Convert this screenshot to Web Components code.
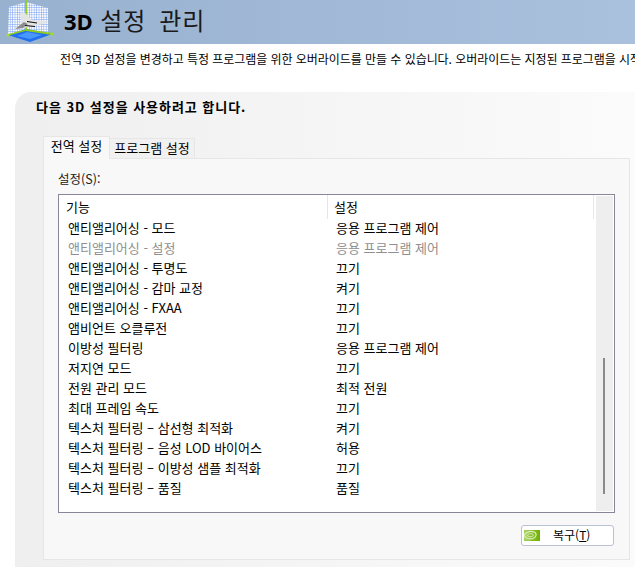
<!DOCTYPE html>
<html lang="ko">
<head>
<meta charset="utf-8">
<title>3D 설정 관리</title>
<style>
  html, body { margin: 0; padding: 0; background: #fff; overflow: hidden; }
  body { width: 635px; height: 567px; font: 13px "Noto Sans CJK KR", "Noto Sans", sans-serif; color: #000; }
</style>
</head>
<body>
<page-header>3D 설정 관리</page-header>
<page-intro>전역 3D 설정을 변경하고 특정 프로그램을 위한 오버라이드를 만들 수 있습니다. 오버라이드는 지정된 프로그램을 시작</page-intro>
<settings-panel heading="다음 3D 설정을 사용하려고 합니다.">
  <tab-strip>
    <tab-item active>전역 설정</tab-item>
    <tab-item>프로그램 설정</tab-item>
  </tab-strip>
  <tab-pane label="설정(S):">
    <settings-list first="기능" second="설정">
      <settings-row name="앤티앨리어싱 - 모드" value="응용 프로그램 제어"></settings-row>
      <settings-row name="앤티앨리어싱 - 설정" value="응용 프로그램 제어" disabled></settings-row>
      <settings-row name="앤티앨리어싱 - 투명도" value="끄기"></settings-row>
      <settings-row name="앤티앨리어싱 - 감마 교정" value="켜기"></settings-row>
      <settings-row name="앤티앨리어싱 - FXAA" value="끄기"></settings-row>
      <settings-row name="앰비언트 오클루전" value="끄기"></settings-row>
      <settings-row name="이방성 필터링" value="응용 프로그램 제어"></settings-row>
      <settings-row name="저지연 모드" value="끄기"></settings-row>
      <settings-row name="전원 관리 모드" value="최적 전원"></settings-row>
      <settings-row name="최대 프레임 속도" value="끄기"></settings-row>
      <settings-row name="텍스처 필터링 – 삼선형 최적화" value="켜기"></settings-row>
      <settings-row name="텍스처 필터링 – 음성 LOD 바이어스" value="허용"></settings-row>
      <settings-row name="텍스처 필터링 – 이방성 샘플 최적화" value="끄기"></settings-row>
      <settings-row name="텍스처 필터링 – 품질" value="품질"></settings-row>
    </settings-list>
    <restore-button slot="footer">복구(<u>T</u>)</restore-button>
  </tab-pane>
</settings-panel>

<script>
const FONT = '"Noto Sans CJK KR", "Noto Sans", sans-serif';

// Base class, every element only has to give its html
class ShadowBox extends HTMLElement {
    constructor() {
        super();
        this.attachShadow({ mode: "open" });
    }
    connectedCallback() {
        this.shadowRoot.innerHTML = this.markup();
    }
}

class PageHeader extends ShadowBox {
    markup() {
        return `
        <style>
            :host { display: flex; height: 44px; background: linear-gradient(90deg, #98b1cf, #a9c1dd); overflow: hidden; }
            svg { margin-left: 5px; flex: none; }
            h1 { margin: 0 0 0 9px; font: 400 24px/40px ${FONT}; letter-spacing: 1px; word-spacing: 5px; color: #1a1a1a; white-space: nowrap; }
            b { font: 700 22px/40px "Open Sans", sans-serif; color: #000; letter-spacing: 0; word-spacing: 1.7px; }
        </style>
        <svg width="50" height="44" viewBox="0 0 50 44">
            <defs>
                <pattern id="g" width="2.400" height="2.400" patternUnits="userSpaceOnUse">
                    <rect width="2.400" height="2.400" fill="#fff"/>
                    <path d="M0 0H2.400M0 0V2.400" stroke="#5c8cf2" stroke-width=".8"/>
                </pattern>
            </defs>
            <path d="M4 7 21 2V30L3 35Z" fill="url(#g)"/>
            <path d="M21 2 43 8V34L21 30Z" fill="url(#g)"/>
            <path d="M3 35 21 29 47 34 25 42Z" fill="#1f6ff0"/>
            <path d="M12 36 22 32 37 35 25 39Z" fill="#4a97fb"/>
            <path d="M21 0V30M21 30 3 35M21 30 47 34" stroke="#8fcb1e" stroke-width="1.800" fill="none"/>
            <circle cx="3" cy="35" r="1.500" fill="#a5dc28"/>
            <circle cx="47" cy="34" r="1.500" fill="#a5dc28"/>
            <path d="M15 13 19 12 27 20 41 21 43 23 28 26 18 28 10 29 17 23Z" fill="#e4e4e4"/>
            <path d="M10 29 19 22 23 24 18 28Z" fill="#8c8c8c"/>
            <path d="M22 21.500 32 23M20 25.500 30 26.500" stroke="#111" stroke-width="1.200"/>
        </svg>
        <h1><b>3D </b>설정 관리</h1>`;
    }
}

class PageIntro extends ShadowBox {
    markup() {
        return `
        <style>
            :host { display: block; height: 48px; padding: 5px 0 0 60px; box-sizing: border-box; white-space: nowrap; overflow: hidden; font: 12px/20px ${FONT}; letter-spacing: -.05px; }
        </style>
        <slot></slot>`;
    }
}

class SettingsPanel extends ShadowBox {
    markup() {
        return `
        <style>
            :host { display: block; margin-left: 15px; height: 475px; padding: 5px 5px 0 28px; box-sizing: border-box;
                    border-top-left-radius: 16px; background: linear-gradient(90deg, #efefef, #fbfbfb); }
            h2 { margin: 0 0 19px -7px; font: 700 13px/20px ${FONT}; letter-spacing: .95px; white-space: nowrap; }
        </style>
        <h2>${this.getAttribute("heading")}</h2>
        <slot></slot>`;
    }
}

class TabStrip extends ShadowBox {
    markup() {
        return `
        <style>
            :host { display: flex; align-items: flex-end; height: 23px; position: relative; z-index: 1; margin-bottom: -1px; }
        </style>
        <slot></slot>`;
    }
}

class TabItem extends ShadowBox {
    markup() {
        const active = this.hasAttribute("active");
        return `
        <style>
            :host { display: block; box-sizing: border-box; white-space: nowrap; font: 13px/18px ${FONT};
                    height: ${active ? 23 : 21}px; width: ${active ? 67 : 85}px; text-align: center;
                    border: 1px solid #e6e6e6; border-bottom: ${active ? "none" : "1px solid #e6e6e6"};
                    border-left: ${active ? "1px solid #e6e6e6" : "none"};
                    background: ${active ? "#f8f8f8" : "#f1f1f1"}; }
        </style>
        <slot></slot>`;
    }
}

class TabPane extends ShadowBox {
    markup() {
        return `
        <style>
            :host { display: block; height: 402px; box-sizing: border-box; padding: 10px 14px 0; border: 1px solid #e6e6e6; background: #f8f8f8; }
            label { display: block; font: 12.5px/20px ${FONT}; height: 25px; color: #222; }
            footer { display: flex; justify-content: flex-end; margin: 12px 1px 0 0; }
        </style>
        <label>${this.getAttribute("label")}</label>
        <slot></slot>
        <footer><slot name="footer"></slot></footer>`;
    }
}

class SettingsList extends ShadowBox {
    markup() {
        return `
        <style>
            :host { display: flex; height: 319px; box-sizing: border-box; border: 1px solid #87879a; background: #fff; }
            .main { flex: 1; min-width: 0; }
            .head { display: grid; grid-template-columns: 268px 1fr; height: 24px; font: 13px/24px ${FONT}; margin: 0 1px -1px 0; border-right: 1px solid #e6e6e6; }
            .head span { padding-left: 7px; }
            .head span + span { border-left: 1px solid #e6e6e6; padding-left: 6px; height: 24px; }
            .bar { flex: none; width: 17px; margin: 1px; background: #eee; position: relative; }
            .thumb { position: absolute; left: 7px; top: 162px; width: 2px; height: 136px; background: #8a8a8a; }
        </style>
        <div class="main">
            <div class="head"><span>${this.getAttribute("first")}</span><span>${this.getAttribute("second")}</span></div>
            <slot></slot>
        </div>
        <div class="bar"><div class="thumb"></div></div>`;
    }
}

class SettingsRow extends ShadowBox {
    markup() {
        return `
        <style>
            :host { display: grid; grid-template-columns: 268px 1fr; height: 20px; font: 13px/20px ${FONT}; white-space: nowrap;
                    color: ${this.hasAttribute("disabled") ? "#8f8f8f" : "#000"}; }
            span { padding-left: 9px; }
        </style>
        <span>${this.getAttribute("name")}</span><span>${this.getAttribute("value")}</span>`;
    }
}

class RestoreButton extends ShadowBox {
    markup() {
        return `
        <style>
            :host { display: flex; align-items: center; box-sizing: border-box; width: 93px; height: 21px; padding-left: 2px; border: 1px solid #b9c2d0; border-radius: 3px; background: #fff; font: 12px/16px ${FONT}; }
            svg { flex: none; }
            span { margin-left: 13px; white-space: nowrap; position: relative; top: -1px; }
        </style>
        <svg width="16" height="11" viewBox="0 0 16 11">
            <defs>
                <linearGradient id="n" x1="0" x2="1" y1="0" y2="0">
                    <stop offset="0" stop-color="#a9d365"/>
                    <stop offset="1" stop-color="#6fae00"/>
                </linearGradient>
            </defs>
            <rect width="16" height="11" fill="url(#n)"/>
            <path d="M0 5.500C3 1.500 7 .5 11 2.500 13 4 12 7.500 9 8.500 5.500 9.500 2 8 0 5.500Z" fill="none" stroke="#dcefbb" stroke-width="1.200"/>
            <path d="M3 5.500C5 3 8 3 9.500 5 9 7 6 7.500 3 5.500Z" fill="none" stroke="#dcefbb" stroke-width="1"/>
        </svg>
        <span><slot></slot></span>`;
    }
}

customElements.define("page-header", PageHeader);
customElements.define("page-intro", PageIntro);
customElements.define("settings-panel", SettingsPanel);
customElements.define("tab-strip", TabStrip);
customElements.define("tab-item", TabItem);
customElements.define("tab-pane", TabPane);
customElements.define("settings-list", SettingsList);
customElements.define("settings-row", SettingsRow);
customElements.define("restore-button", RestoreButton);
</script>
</body>
</html>
